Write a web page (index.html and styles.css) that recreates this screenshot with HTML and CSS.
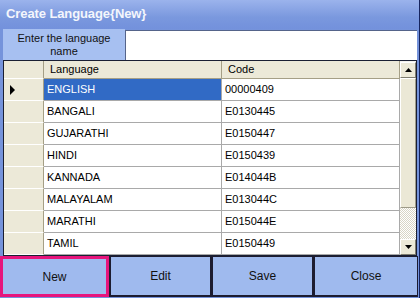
FILE: index.html
```html
<!DOCTYPE html>
<html>
<head>
<meta charset="utf-8">
<link rel="stylesheet" href="styles.css">
</head>
<body>
<div class="window">
  <div class="titlebar">Create Language{New}</div>
  <div class="inputrow">
    <div class="label">Enter the language<br>name</div>
    <div class="input"></div>
  </div>
  <div class="grid">
    <div class="table">
      <div class="row head">
        <div class="rh"></div>
        <div class="cell">Language</div>
        <div class="cell">Code</div>
      </div>
      <div class="row current">
        <div class="rh"><span class="arrow"></span></div>
        <div class="cell sel">ENGLISH</div>
        <div class="cell">00000409</div>
      </div>
      <div class="row"><div class="rh"></div><div class="cell">BANGALI</div><div class="cell">E0130445</div></div>
      <div class="row"><div class="rh"></div><div class="cell">GUJARATHI</div><div class="cell">E0150447</div></div>
      <div class="row"><div class="rh"></div><div class="cell">HINDI</div><div class="cell">E0150439</div></div>
      <div class="row"><div class="rh"></div><div class="cell">KANNADA</div><div class="cell">E014044B</div></div>
      <div class="row"><div class="rh"></div><div class="cell">MALAYALAM</div><div class="cell">E013044C</div></div>
      <div class="row"><div class="rh"></div><div class="cell">MARATHI</div><div class="cell">E015044E</div></div>
      <div class="row"><div class="rh"></div><div class="cell">TAMIL</div><div class="cell">E0150449</div></div>
    </div>
    <div class="scrollbar">
      <div class="sbtn"><svg width="7" height="4" viewBox="0 0 7 4"><path d="M0 4 L3.5 0 L7 4 Z" fill="#000"/></svg></div>
      <div class="thumb"></div>
      <div class="track"></div>
      <div class="sbtn"><svg width="7" height="4" viewBox="0 0 7 4"><path d="M0 0 L3.5 4 L7 0 Z" fill="#000"/></svg></div>
    </div>
  </div>
  <div class="buttons">
    <div class="btn active">New</div>
    <div class="btn">Edit</div>
    <div class="btn">Save</div>
    <div class="btn">Close</div>
  </div>
</div>
</body>
</html>
```

FILE: styles.css
```css
* { box-sizing: border-box; }
html, body { margin: 0; padding: 0; }
body {
  width: 420px;
  height: 298px;
  overflow: hidden;
  font-family: Tahoma, "Liberation Sans", Arial, sans-serif;
  font-size: 11px;
  color: #000;
}
.window {
  width: 420px;
  height: 298px;
  background: #7593db;
  border-right: 1px solid #16245e;
  display: flex;
  flex-direction: column;
}
.titlebar {
  height: 29px;
  flex: none;
  background: linear-gradient(#9bb3ec, #7a98de 60%, #7391dc);
  color: #f4f6fc;
  font-weight: bold;
  font-size: 13px;
  padding-left: 6px;
  line-height: 28px;
  letter-spacing: -0.1px;
}
.inputrow {
  height: 31px;
  flex: none;
  display: flex;
  padding: 0 2px 0 3px;
}
.label {
  width: 122px;
  background: #a7c0f1;
  text-align: center;
  line-height: 13px;
  padding-top: 3px;
  color: #111;
}
.input {
  flex: 1;
  background: #fff;
  border-top: 1px solid #55648a;
  border-left: 1px solid #55648a;
  margin-top: 1px;
}
.grid {
  height: 196px;
  flex: none;
  margin: 0 2px 0 3px;
  border: 1px solid #1a1f33;
  background: #fff;
  display: flex;
}
.table {
  width: 396px;
  display: flex;
  flex-direction: column;
}
.row {
  display: flex;
  height: 22px;
  border-bottom: 1px solid #a9a9a9;
}
.row.head {
  height: 18px;
  border-bottom: 1px solid #a59f86;
}
.rh {
  width: 40px;
  flex: none;
  background: #ece9d8;
  border-right: 1px solid #a59f86;
  position: relative;
}
.row .rh { margin-bottom: -1px; border-bottom: 1px solid #fff; }
.cell {
  width: 178px;
  flex: none;
  border-right: 1px solid #a9a9a9;
  padding-left: 3px;
  line-height: 21px;
  white-space: nowrap;
}
.head .cell {
  background: #ece9d8;
  border-right: 1px solid #a59f86;
  line-height: 17px;
  padding-left: 6px;
}
.cell.sel {
  background: #316ac5;
  color: #fff;
}
.arrow {
  position: absolute;
  left: 6px;
  top: 6px;
  width: 0;
  height: 0;
  border-top: 5px solid transparent;
  border-bottom: 5px solid transparent;
  border-left: 5px solid #000;
}
.scrollbar {
  width: 16px;
  flex: none;
  display: flex;
  flex-direction: column;
  background: #f4f3ee;
  padding-top: 1px;
}
.sbtn {
  height: 16px;
  flex: none;
  background: #ece9d8;
  border: 1px solid;
  border-color: #fff #7f7d70 #7f7d70 #fff;
  display: flex;
  align-items: center;
  justify-content: center;
}
.thumb {
  height: 130px;
  flex: none;
  background: #ebe8d6;
  border: 1px solid;
  border-color: #fff #9d9a88 #9d9a88 #fff;
}
.track {
  flex: 1;
  background-color: #f4f3ee;
  background-image: repeating-conic-gradient(#ffffff 0 25%, #d8d5c6 0 50%);
  background-size: 2px 2px;
}
.buttons {
  flex: 1;
  display: flex;
  padding: 0 2px 1px 0;
}
.btn {
  flex: none;
  width: 102px;
  background: #9fbaee;
  border: 1px solid #1c1c30;
  border-width: 1px 1px 2px 2px;
  display: flex;
  align-items: center;
  justify-content: center;
  font-size: 12px;
  color: #111;
}
.btn.active {
  width: 109px;
  border: 3px solid #e6157c;
}
.btn:last-child { width: 105px; }
```
